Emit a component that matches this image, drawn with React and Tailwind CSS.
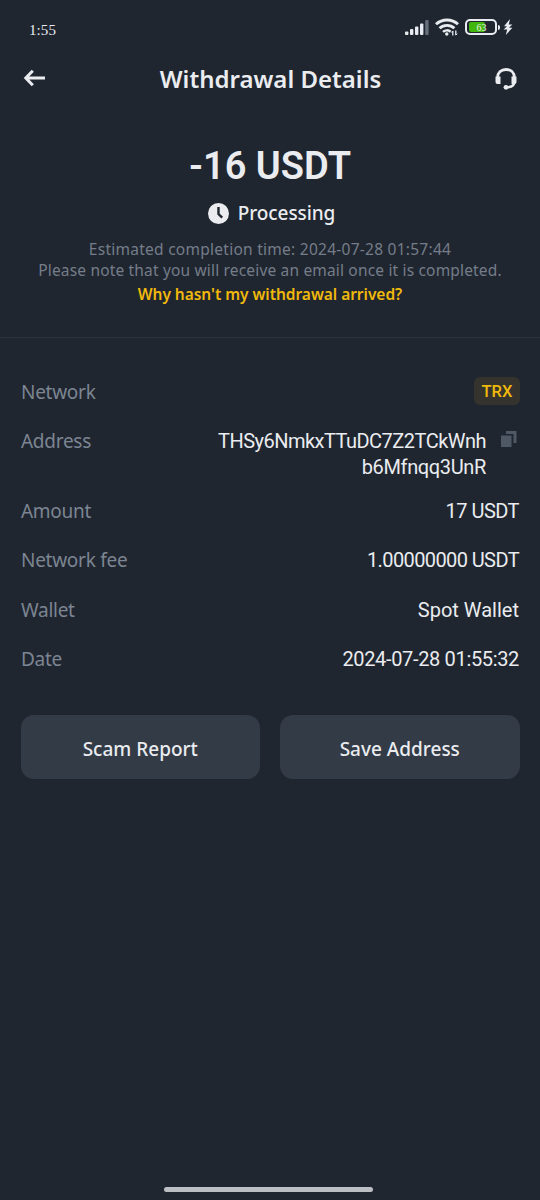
import React from "react";

const plex = "font-['Noto_Sans',sans-serif]";
const din = "font-['Roboto',sans-serif]";

const StatusBar = () => (
  <div className="flex h-[56px] items-start justify-between pl-[29px] pr-[27px]">
    <span className="mt-[21px] font-['Liberation_Serif',serif] text-[15px] leading-[18px] tracking-[0.1px] text-[#e6eaf0]">
      1:55
    </span>
    <div className="mt-[18px] flex items-center">
      {/* SIGNAL */}
      <svg width="24" height="18" viewBox="0 0 24 18" fill="#e8ecf1">
        <rect x="0" y="13.500" width="3.400" height="3.500" rx="1" />
        <rect x="5" y="11" width="3.400" height="6" rx="1" />
        <rect x="10" y="8.500" width="3.400" height="8.500" rx="1" />
        <rect x="15" y="5.500" width="3.400" height="11.500" rx="1" />
        <rect x="20.200" y="2" width="3.400" height="15" rx="1" fill="#66707c" />
      </svg>
      {/* WIFI */}
      <svg className="ml-[6px]" width="24" height="18" viewBox="0 0 24 18" fill="none" stroke="#e8ecf1" strokeWidth="2.900">
        <path d="M1 6.200C7.200 .5 16.800 .5 23 6.200" />
        <path d="M4.600 10.300C8.800 6.400 15.200 6.400 19.400 10.300" />
        <path d="M8 13.900C10.200 11.900 13.600 11.900 15.600 13.700" strokeWidth="2.500" />
        <circle cx="11.800" cy="16" r="1.700" fill="#e8ecf1" stroke="none" />
        <path d="M17.800 17.500V13M20.800 12.500V17" strokeWidth="1.300" />
        <path d="M16.400 14.500L17.800 12.900M22.200 15.600L20.800 17.200" strokeWidth="1" />
      </svg>
      {/* BATTERY */}
      <div className="relative ml-[6px] flex h-[16px] w-[32px] items-center rounded-[5px] border-2 border-[#e8ecf1] p-[2px]">
        <div className="h-[10px] w-[16px] rounded-[2px] bg-[#41b60d]" />
        <span className="absolute inset-0 pl-[1px] text-center font-['Liberation_Serif',serif] text-[10px] leading-[14px] text-[#eef5e9]">
          63
        </span>
      </div>
      <div className="ml-[1px] h-[5px] w-[2px] rounded-r bg-[#e8ecf1]" />
      <svg className="ml-[3px]" width="10" height="18" viewBox="0 0 10 18" fill="#e8ecf1">
        <path d="M7 1L1 8.300H4L.6 11.500H4.200L2.800 17L9.400 9.800H6L9.300 6.500H5.800Z" />
      </svg>
    </div>
  </div>
);

const Header = () => (
  <div className="flex h-[46px] items-center justify-between pl-[23px] pr-[22px]">
    <svg width="24" height="20" viewBox="0 0 24 20" fill="none" stroke="#eaecef" strokeWidth="3">
      <path d="M22 9H3.500M9.800 1.800L2.800 9L9.800 16.200" />
    </svg>
    <h1 className={`${plex} text-[24px] font-semibold leading-[32px] text-[#eaecef]`}>
      Withdrawal Details
    </h1>
    <svg width="24" height="24" viewBox="0 0 24 24" fill="none" stroke="#eaecef" strokeWidth="2.800">
      <path d="M3.700 12V10.500C3.700 5.500 7.200 2.500 12 2.500S20.300 5.500 20.300 10.500V12" />
      <path d="M20.500 15C20 18.500 17 20.300 12.500 20.300" strokeWidth="2.400" />
      <path d="M1.500 9.500H6.500V17H3.500A2 2 0 0 1 1.500 15ZM17.500 9.500H22.500V15A2 2 0 0 1 20.500 17H17.500Z" fill="#eaecef" stroke="none" />
      <circle cx="12" cy="20.300" r="2.400" fill="#eaecef" stroke="none" />
    </svg>
  </div>
);

const Row = ({ label, children, className = "h-[49.5px]" }) => (
  <div className={`flex items-start justify-between ${className}`}>
    <span className={`${plex} text-[19px] leading-[26px] tracking-[-0.27px] text-[#7c8592]`}>{label}</span>
    {children}
  </div>
);

const Value = ({ children, className = "tracking-[-0.52px]" }) => (
  <span className={`${din} text-right text-[20px] leading-[26px] text-[#eaecef] ${className}`}>
    {children}
  </span>
);

const App = () => {
  return (
    <div className="flex h-[1200px] w-[540px] flex-col overflow-hidden bg-[#202630]">
      <StatusBar />
      <Header />

      {/* AMOUNT + STATUS */}
      <div className="flex h-[236px] flex-col items-center border-b border-[#2b333d] pt-[42px]">
        <div className={`${din} text-[38px] font-semibold leading-[44px] text-[#eaecef]`}>
          -16 USDT
        </div>
        <div className="mt-[12px] flex items-center gap-[9px] pl-[3px]">
          <svg width="21" height="21" viewBox="0 0 21 21">
            <circle cx="10.500" cy="10.500" r="10.500" fill="#eaecef" />
            <path d="M10.500 4V11L14.200 14.700" fill="none" stroke="#202630" strokeWidth="2.400" />
          </svg>
          <span className={`${plex} text-[19px] font-medium leading-[26px] tracking-[-0.1px] text-[#eaecef]`}>
            Processing
          </span>
        </div>
        <p className={`${plex} mt-[12px] text-[15.500px] leading-[22px] tracking-[0.26px] text-[#747d89]`}>
          Estimated completion time: 2024-07-28 01:57:44
        </p>
        <p className={`${plex} -mt-[1px] whitespace-nowrap text-[15.500px] leading-[22px] tracking-[0.17px] text-[#747d89]`}>
          Please note that you will receive an email once it is completed.
        </p>
        <a className={`${plex} mt-[2px] text-[15.500px] font-semibold leading-[22px] tracking-[-0.03px] text-[#f0b90b]`}>
          Why hasn't my withdrawal arrived?
        </a>
      </div>

      {/* DETAILS */}
      <div className="px-[21px] pt-[41px]">
        <Row label="Network" className="h-[49px]">
          <span className={`${din} -mt-[2px] -mr-[1px] h-[28px] w-[46px] rounded-[6px] bg-[#35332d] text-center text-[16.500px] font-medium leading-[30px] text-[#f0b90b]`}>
            TRX
          </span>
        </Row>
        <Row label="Address" className="h-[69.5px]">
          <div className="flex">
            <div className="flex flex-col">
              <Value>THSy6NmkxTTuDC7Z2TCkWnh</Value>
              <Value className="tracking-[-0.36px]">b6Mfnqq3UnR</Value>
            </div>
            <svg className="ml-[15px] mr-[2px] mt-[3px]" width="16" height="17" viewBox="0 0 16 17" fill="#4f5966">
              <path d="M0 4.500H10.500V16H0Z" />
              <path d="M5 0H15.500V12H12.500V3H5Z" />
            </svg>
          </div>
        </Row>
        <Row label="Amount"><Value>17 USDT</Value></Row>
        <Row label="Network fee"><Value className="tracking-[-0.6px]">1.00000000 USDT</Value></Row>
        <Row label="Wallet"><Value className="">Spot Wallet</Value></Row>
        <Row label="Date"><Value className="tracking-[-0.34px]">2024-07-28 01:55:32</Value></Row>
      </div>

      {/* ACTIONS */}
      <div className="mt-[19.5px] grid grid-cols-2 gap-[20px] px-[20.5px]">
        {["Scam Report", "Save Address"].map((text) => (
          <button
            key={text}
            className={`${plex} h-[64px] rounded-[13px] bg-[#333b47] pt-[4px] text-[19px] font-medium text-[#eaecef]`}
          >
            {text}
          </button>
        ))}
      </div>

      <div className="mb-[8px] ml-[164px] mt-auto h-[5px] w-[209px] rounded-full bg-[#bbbec2]" />
    </div>
  );
};

export default App;
